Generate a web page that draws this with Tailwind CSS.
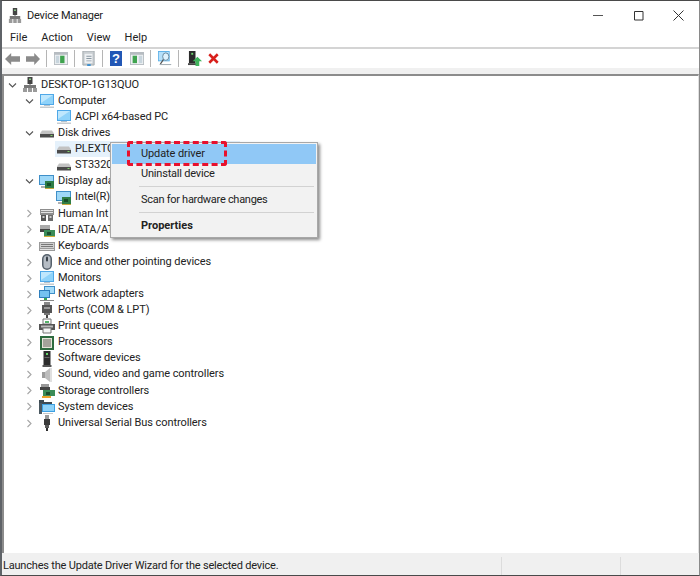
<!DOCTYPE html>
<html lang="en">
<head>
<meta charset="UTF-8">
<title>Device Manager</title>
<script src="https://cdn.jsdelivr.net/npm/@tailwindcss/browser@4"></script>
</head>
<body class="bg-white">
<svg width="0" height="0" class="absolute">
  <defs>
    <symbol id="chev-down" viewBox="0 0 9 9"><path d="M1 2.500 4.500 6 8 2.500" fill="none" stroke="#555" stroke-width="1.100"/></symbol>
    <symbol id="chev-right" viewBox="0 0 9 9"><path d="M2.500 1 6 4.500 2.500 8" fill="none" stroke="#a6a6a6" stroke-width="1.100"/></symbol>
    <symbol id="pc" viewBox="0 0 16 16"><path d="M5.500 0h5v7h-5z" fill="#444"/><path d="M7 1.500h2v1.500H7z" fill="#8c8"/><path d="M2 8h12v3H2z" fill="#777"/><path d="M1 11h4v4H1zM6 11h4v4H6zM11 11h4v4h-4z" fill="#9a9a9a"/><path d="M7.500 7h1v1h-1z" fill="#555"/></symbol>
    <symbol id="monitor" viewBox="0 0 16 16"><path d="M1 1h14v11H1z" fill="#4fa8e8"/><path d="M2 2h12v9H2z" fill="#8fd3fa"/><path d="M2 2h12L2 10z" fill="#bfe7fd"/><path d="M5 12h6v1H5z" fill="#b5c3cc"/><path d="M1 13.500h14v1.500H1z" fill="#c6ccd0"/></symbol>
    <symbol id="disk" viewBox="0 0 16 16"><path d="M3 5.500h10l2 3v3H1v-3z" fill="#c2c2c2"/><path d="M1 9h14v3.500H1z" fill="#4b4b4b"/><path d="M11.500 10h2v1h-2z" fill="#7fd36a"/></symbol>
    <symbol id="display" viewBox="0 0 16 16"><path d="M0 1h15v10H0z" fill="#3f8fc8"/><path d="M1 2h13v8H1z" fill="#9ed8f8"/><path d="M2 12h7v2H2z" fill="#b0b0b0"/><path d="M6 7h9v7H6z" fill="#2f7d46"/><path d="M8 9h4v3H8z" fill="#174d2a"/><path d="M6 14h9v1H6z" fill="#c9a83f"/></symbol>
    <symbol id="hid" viewBox="0 0 16 16"><path d="M1 3h14v6H1z" fill="#8d8d8d"/><path d="M2 4h12v1H2zM2 6h12v1H2z" fill="#e3e3e3"/><path d="M2 9h5v6H2z" fill="#555"/><path d="M9 9h5v6H9z" fill="#6d6d6d"/><path d="M3.500 10h2v2h-2zM10.500 10h2v2h-2z" fill="#ccc"/></symbol>
    <symbol id="ide" viewBox="0 0 16 16"><path d="M1 3h10v4H1z" fill="#aaa"/><path d="M1 7h10v3H1z" fill="#444"/><path d="M5 8h11v6H5z" fill="#3b8c58"/><path d="M8 10h4v3H8z" fill="#1c4f30"/><path d="M5 14h11v1H5z" fill="#d1ad3a"/></symbol>
    <symbol id="keyboard" viewBox="0 0 16 16"><path d="M0 4h16v9H0z" fill="#9a9a9a"/><path d="M1 5h14v5H1z" fill="#cfcfcf"/><path d="M2 6h12v1H2zM2 8h12v1H2z" fill="#777"/><path d="M1 11h14v1H1z" fill="#e2e2e2"/></symbol>
    <symbol id="mouse" viewBox="0 0 16 16"><rect x="3" y="0" width="10" height="16" rx="5" fill="#55606b"/><rect x="4.500" y="1.500" width="7" height="13" rx="3.500" fill="#b5bcc4"/><rect x="7" y="2.500" width="2" height="5" rx="1" fill="#3a4149"/></symbol>
    <symbol id="network" viewBox="0 0 16 16"><path d="M5 0h11v8H5z" fill="#3f8fc8"/><path d="M6 1h9v6H6z" fill="#a5dcf9"/><path d="M0 4h11v8H0z" fill="#2f7fbd"/><path d="M1 5h9v6H1z" fill="#74c2f0"/><path d="M1 14h14v1H1z" fill="#888"/><path d="M5 12h3v2H5z" fill="#3aa655"/></symbol>
    <symbol id="port" viewBox="0 0 16 16"><path d="M5 0h6v3H5z" fill="#888"/><path d="M3 3h10v8H3z" fill="#555"/><path d="M5 5h6v2H5z" fill="#9a9a9a"/><path d="M5 11h6v2H5z" fill="#777"/><path d="M7 13h2v3H7z" fill="#444"/></symbol>
    <symbol id="printer" viewBox="0 0 16 16"><path d="M4 1h8v5H4z" fill="#fff" stroke="#777"/><path d="M0 6h16v6H0z" fill="#555"/><path d="M2 7.500h12v2H2z" fill="#bbb"/><path d="M4 10h8v5H4z" fill="#f5f5f5" stroke="#777"/><path d="M6 3h4v2H6z" fill="#56b36a"/></symbol>
    <symbol id="cpu" viewBox="0 0 16 16"><path d="M1 1h14v14H1z" fill="#2e6b3f"/><path d="M3 3h10v10H3z" fill="#e4e4d8"/><path d="M4 4h8v8H4z" fill="#a3a39a"/></symbol>
    <symbol id="software" viewBox="0 0 16 16"><path d="M4.500 0h7v14h-7z" fill="#2c2c2c"/><path d="M7 2h2v2H7z" fill="#64d46a"/><path d="M5.500 6h5v1h-5z" fill="#666"/><path d="M3.500 14h9v2h-9z" fill="#555"/></symbol>
    <symbol id="sound" viewBox="0 0 16 16"><path d="M3 5h3v6H3z" fill="#9c9c9c"/><path d="M6 5l5-4v14l-5-4z" fill="#bdbdbd"/><path d="M11 1h2v14h-2z" fill="#e0e0e0"/></symbol>
    <symbol id="storage" viewBox="0 0 16 16"><path d="M2 1h8v3H2z" fill="#999"/><path d="M1 4h10v3H1z" fill="#444"/><path d="M4 7h12v6H4z" fill="#3b8c58"/><path d="M7 9h4v3H7z" fill="#1c4f30"/><path d="M3 13h9v2H3z" fill="#eaa22c"/></symbol>
    <symbol id="system" viewBox="0 0 16 16"><path d="M0 1h5v2h8v3H0z" fill="#3d4a52"/><path d="M0 4h3v11H0z" fill="#4a5861"/><path d="M3 5h13v8H3z" fill="#3da0e2"/><path d="M4 6h11v6H4z" fill="#8ed2f8"/><path d="M4 14h10v1H4z" fill="#c8c8c8"/></symbol>
    <symbol id="usb" viewBox="0 0 16 16"><path d="M6 0h4v4H6z" fill="#9a9a9a"/><path d="M5 4h6v6H5z" fill="#3b3b3b"/><path d="M6 10h4v3H6z" fill="#5a5a5a"/><path d="M7 13h2v3H7z" fill="#2e2e2e"/></symbol>
  </defs>
</svg>

<div class="relative w-[700px] h-[576px] overflow-hidden flex flex-col bg-[#f0f0f0] border-t border-t-[#4a4a4a] border-l-2 border-l-[#5f6368] border-r border-r-[#8a8a8a] border-b border-b-[#4a4a4a] text-[11px] text-[#222] font-['Roboto','Noto_Sans',sans-serif]">

  <!-- title bar -->
  <div class="h-[29px] bg-white flex items-center pl-[6px] shrink-0">
    <svg class="w-[14px] h-[16px]" viewBox="0 0 16 16" preserveAspectRatio="none"><use href="#pc"/></svg>
    <span class="ml-[5px] mt-[1px] tracking-[-0.2px]">Device Manager</span>
    <div class="ml-auto flex items-center gap-[29px] pr-[15px]">
      <svg class="w-[11px] h-[11px]" viewBox="0 0 11 11"><path d="M0 5.500h10" stroke="#555" stroke-width="1"/></svg>
      <svg class="w-[11px] h-[11px]" viewBox="0 0 11 11"><path d="M1.500 1.500h8.500v8.500H1.500z" fill="none" stroke="#333" stroke-width="1"/></svg>
      <svg class="w-[11px] h-[11px]" viewBox="0 0 11 11"><path d="M.5.500l10 10M10.500.500l-10 10" stroke="#333" stroke-width="1"/></svg>
    </div>
  </div>

  <!-- menu bar -->
  <div class="h-[16px] bg-white flex items-center pl-[8px] gap-[14px] shrink-0 border-b-2 border-b-[#d4d4d4] box-content pb-px">
    <span>File</span><span>Action</span><span>View</span><span>Help</span>
  </div>

  <!-- toolbar -->
  <div class="h-[19px] bg-white flex items-center pl-[3px] shrink-0">
    <svg class="w-[15px] h-[12px]" viewBox="0 0 17 13" preserveAspectRatio="none"><path d="M0 6.500 7 0v3.500h10v6H7V13z" fill="#8b8b8b"/></svg>
    <svg class="w-[14px] h-[12px] ml-[6px]" viewBox="0 0 17 13" preserveAspectRatio="none"><path d="M17 6.500 10 0v3.500H0v6h10V13z" fill="#8b8b8b"/></svg>
    <div class="w-px h-[17px] bg-[#b5b5b5] ml-[6px]"></div>
    <svg class="w-[14px] h-[13px] ml-[7px]" viewBox="0 0 16 14" preserveAspectRatio="none"><path d="M0 0h16v14H0z" fill="#b6bcc1"/><path d="M1 3h14v10H1z" fill="#eef1f3"/><path d="M7 4h5v8H7z" fill="#3fa34f"/><path d="M2 4h4v8H2z" fill="#c8d5dd"/></svg>
    <div class="w-px h-[17px] bg-[#b5b5b5] ml-[6px]"></div>
    <svg class="w-[13px] h-[15px] ml-[7px]" viewBox="0 0 15 16" preserveAspectRatio="none"><path d="M1 0h13v15H1z" fill="#c9ced2" stroke="#a3a9ad"/><path d="M3 3h9v10H3z" fill="#eef1f3"/><path d="M5 5h6v1H5zM5 7.500h6v1H5zM5 10h6v1H5z" fill="#8a98a3"/><path d="M6 14h4v2H6z" fill="#3a8fd0"/></svg>
    <div class="w-px h-[17px] bg-[#b5b5b5] ml-[7px]"></div>
    <div class="ml-[7px] w-[12px] h-[15px] bg-[#2257b5] text-white flex items-center justify-center text-[13px] font-bold font-['Liberation_Sans'] leading-none">?</div>
    <svg class="w-[14px] h-[13px] ml-[8px]" viewBox="0 0 16 14" preserveAspectRatio="none"><path d="M0 0h16v14H0z" fill="#b6bcc1"/><path d="M1 3h14v10H1z" fill="#eef1f3"/><path d="M3 4h5v8H3z" fill="#3fa34f"/><path d="M10 4h4v8h-4z" fill="#c8d5dd"/></svg>
    <div class="w-px h-[17px] bg-[#b5b5b5] ml-[6px]"></div>
    <svg class="w-[14px] h-[15px] ml-[7px]" viewBox="0 0 18 16" preserveAspectRatio="none"><path d="M0 0h15v11H0z" fill="#5cb0e8"/><path d="M1 1h13v9H1z" fill="#b6e0fa"/><circle cx="10" cy="6" r="4" fill="#dff2fd" stroke="#5d7f96"/><path d="M7 9 3 14" stroke="#555" stroke-width="1.500"/><path d="M2 14h15v1H2z" fill="#9aa5ad"/></svg>
    <div class="w-px h-[17px] bg-[#b5b5b5] ml-[6px]"></div>
    <svg class="w-[15px] h-[15px] ml-[9px]" viewBox="0 0 16 16"><path d="M1 0h7v13H1z" fill="#2b2b2b"/><path d="M3.500 2h2v2h-2z" fill="#6fd66f"/><path d="M0 13h9v2H0z" fill="#444"/><path d="M10 6l5 5h-3v5H8v-5H5z" fill="#3fb45c"/></svg>
    <svg class="w-[11px] h-[11px] ml-[5px]" viewBox="0 0 13 13"><path d="M1.500 1.500l10 10M11.500 1.500l-10 10" stroke="#d8201c" stroke-width="3"/></svg>
  </div>

  <div class="h-[6px] shrink-0"></div>

  <!-- device tree -->
  <div class="flex-1 bg-white border-t-2 border-t-[#8c8c8c] border-l-2 border-l-[#8c8c8c] border-r border-r-[#e0e0e0] pt-[1px] tracking-[-0.08px]">
    <div class="flex items-center h-[16.1px] pl-[4px]"><svg class="w-[9px] h-[9px]"><use href="#chev-down"/></svg><svg class="w-[16px] h-[16px] ml-[5px]"><use href="#pc"/></svg><span class="ml-[3px]">DESKTOP-1G13QUO</span></div>
    <div class="flex items-center h-[16.1px] pl-[21px]"><svg class="w-[9px] h-[9px]"><use href="#chev-down"/></svg><svg class="w-[16px] h-[16px] ml-[5px]"><use href="#monitor"/></svg><span class="ml-[3px]">Computer</span></div>
    <div class="flex items-center h-[16.1px] pl-[52px]"><svg class="w-[16px] h-[16px]"><use href="#monitor"/></svg><span class="ml-[3px]">ACPI x64-based PC</span></div>
    <div class="flex items-center h-[16.1px] pl-[21px]"><svg class="w-[9px] h-[9px]"><use href="#chev-down"/></svg><svg class="w-[16px] h-[16px] ml-[5px]"><use href="#disk"/></svg><span class="ml-[3px]">Disk drives</span></div>
    <div class="flex items-center h-[16.1px] ml-[51px] pl-[1px] w-[185px] bg-[#e5f1fb]"><svg class="w-[16px] h-[16px]"><use href="#disk"/></svg><span class="ml-[3px]">PLEXTO</span></div>
    <div class="flex items-center h-[16.1px] pl-[52px]"><svg class="w-[16px] h-[16px]"><use href="#disk"/></svg><span class="ml-[3px]">ST33203</span></div>
    <div class="flex items-center h-[16.1px] pl-[21px]"><svg class="w-[9px] h-[9px]"><use href="#chev-down"/></svg><svg class="w-[16px] h-[16px] ml-[5px]"><use href="#display"/></svg><span class="ml-[3px]">Display ada</span></div>
    <div class="flex items-center h-[16.1px] pl-[52px]"><svg class="w-[16px] h-[16px]"><use href="#display"/></svg><span class="ml-[3px]">Intel(R)</span></div>
    <div class="flex items-center h-[16.1px] pl-[21px]"><svg class="w-[9px] h-[9px]"><use href="#chev-right"/></svg><svg class="w-[16px] h-[16px] ml-[5px]"><use href="#hid"/></svg><span class="ml-[3px]">Human Int</span></div>
    <div class="flex items-center h-[16.1px] pl-[21px]"><svg class="w-[9px] h-[9px]"><use href="#chev-right"/></svg><svg class="w-[16px] h-[16px] ml-[5px]"><use href="#ide"/></svg><span class="ml-[3px]">IDE ATA/AT</span></div>
    <div class="flex items-center h-[16.1px] pl-[21px]"><svg class="w-[9px] h-[9px]"><use href="#chev-right"/></svg><svg class="w-[16px] h-[16px] ml-[5px]"><use href="#keyboard"/></svg><span class="ml-[3px]">Keyboards</span></div>
    <div class="flex items-center h-[16.1px] pl-[21px]"><svg class="w-[9px] h-[9px]"><use href="#chev-right"/></svg><svg class="w-[16px] h-[16px] ml-[5px]"><use href="#mouse"/></svg><span class="ml-[3px]">Mice and other pointing devices</span></div>
    <div class="flex items-center h-[16.1px] pl-[21px]"><svg class="w-[9px] h-[9px]"><use href="#chev-right"/></svg><svg class="w-[16px] h-[16px] ml-[5px]"><use href="#monitor"/></svg><span class="ml-[3px]">Monitors</span></div>
    <div class="flex items-center h-[16.1px] pl-[21px]"><svg class="w-[9px] h-[9px]"><use href="#chev-right"/></svg><svg class="w-[16px] h-[16px] ml-[5px]"><use href="#network"/></svg><span class="ml-[3px]">Network adapters</span></div>
    <div class="flex items-center h-[16.1px] pl-[21px]"><svg class="w-[9px] h-[9px]"><use href="#chev-right"/></svg><svg class="w-[16px] h-[16px] ml-[5px]"><use href="#port"/></svg><span class="ml-[3px]">Ports (COM &amp; LPT)</span></div>
    <div class="flex items-center h-[16.1px] pl-[21px]"><svg class="w-[9px] h-[9px]"><use href="#chev-right"/></svg><svg class="w-[16px] h-[16px] ml-[5px]"><use href="#printer"/></svg><span class="ml-[3px]">Print queues</span></div>
    <div class="flex items-center h-[16.1px] pl-[21px]"><svg class="w-[9px] h-[9px]"><use href="#chev-right"/></svg><svg class="w-[16px] h-[16px] ml-[5px]"><use href="#cpu"/></svg><span class="ml-[3px]">Processors</span></div>
    <div class="flex items-center h-[16.1px] pl-[21px]"><svg class="w-[9px] h-[9px]"><use href="#chev-right"/></svg><svg class="w-[16px] h-[16px] ml-[5px]"><use href="#software"/></svg><span class="ml-[3px]">Software devices</span></div>
    <div class="flex items-center h-[16.1px] pl-[21px]"><svg class="w-[9px] h-[9px]"><use href="#chev-right"/></svg><svg class="w-[16px] h-[16px] ml-[5px]"><use href="#sound"/></svg><span class="ml-[3px]">Sound, video and game controllers</span></div>
    <div class="flex items-center h-[16.1px] pl-[21px]"><svg class="w-[9px] h-[9px]"><use href="#chev-right"/></svg><svg class="w-[16px] h-[16px] ml-[5px]"><use href="#storage"/></svg><span class="ml-[3px]">Storage controllers</span></div>
    <div class="flex items-center h-[16.1px] pl-[21px]"><svg class="w-[9px] h-[9px]"><use href="#chev-right"/></svg><svg class="w-[16px] h-[16px] ml-[5px]"><use href="#system"/></svg><span class="ml-[3px]">System devices</span></div>
    <div class="flex items-center h-[16.1px] pl-[21px]"><svg class="w-[9px] h-[9px]"><use href="#chev-right"/></svg><svg class="w-[16px] h-[16px] ml-[5px]"><use href="#usb"/></svg><span class="ml-[3px]">Universal Serial Bus controllers</span></div>
  </div>

  <!-- status bar -->
  <div class="h-[22px] shrink-0 flex items-end">
    <div class="w-[499px] h-[18px] pl-[1px] flex items-center tracking-[-0.2px]">Launches the Update Driver Wizard for the selected device.</div>
    <div class="w-[119px] h-[18px] border-l border-l-[#dcdcdc]"></div>
    <div class="flex-1 h-[18px] border-l border-l-[#dcdcdc]"></div>
  </div>

  <!-- context menu -->
  <div class="absolute left-[108px] top-[141px] w-[208px] h-[96px] bg-[#f2f2f2] border border-[#a8a8a8] shadow-[2px_2px_3px_rgba(0,0,0,0.45)] p-[1px]">
    <div class="h-[20px] bg-[#90c8f6] flex items-center pl-[29px] pt-[1px] tracking-[-0.1px]">Update driver</div>
    <div class="h-[20px] flex items-center pl-[29px] pt-[1px] tracking-[-0.2px]">Uninstall device</div>
    <div class="h-px bg-[#d2d2d2] ml-[27px] mr-[2px] mt-[2px]"></div>
    <div class="h-[25px] flex items-center pl-[29px] pt-[2px] tracking-[-0.28px]">Scan for hardware changes</div>
    <div class="h-px bg-[#d2d2d2] ml-[27px] mr-[2px]"></div>
    <div class="h-[26px] flex items-center pl-[29px] pt-[1px] font-bold">Properties</div>
  </div>

  <!-- red callout -->
  <div class="absolute left-[125px] top-[140px] w-[100px] h-[25px] rounded-[3px] border-[3px] border-dashed border-[#e8112d]"></div>
</div>
</body>
</html>
